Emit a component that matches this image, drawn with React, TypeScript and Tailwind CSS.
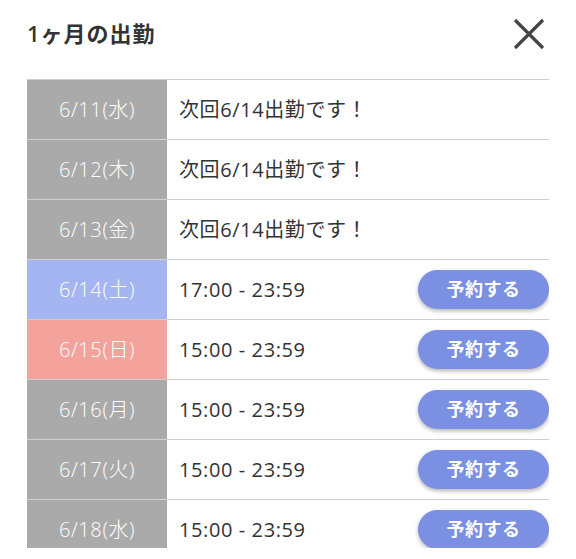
const rows: { date: string; kind: "gray" | "sat" | "sun"; text: string; reserve: boolean }[] = [
  { date: "6/11(水)", kind: "gray", text: "次回6/14出勤です！", reserve: false },
  { date: "6/12(木)", kind: "gray", text: "次回6/14出勤です！", reserve: false },
  { date: "6/13(金)", kind: "gray", text: "次回6/14出勤です！", reserve: false },
  { date: "6/14(土)", kind: "sat", text: "17:00 - 23:59", reserve: true },
  { date: "6/15(日)", kind: "sun", text: "15:00 - 23:59", reserve: true },
  { date: "6/16(月)", kind: "gray", text: "15:00 - 23:59", reserve: true },
  { date: "6/17(火)", kind: "gray", text: "15:00 - 23:59", reserve: true },
  { date: "6/18(水)", kind: "gray", text: "15:00 - 23:59", reserve: true },
];

const dateBg = {
  gray: "bg-[#aaaaaa]",
  sat: "bg-[#a5b5f1]",
  sun: "bg-[#f4a29c]",
};

export default function App() {
  return (
    <div
      className="h-[559px] w-[576px] bg-white"
      style={{ fontFamily: '"Open Sans", "Noto Sans CJK JP", sans-serif' }}
    >
      {/* Header */}
      <div className="flex h-[79px] items-start justify-between pl-[27px] pr-[31px] pt-[18px]">
        <h2 className="text-[22px] font-semibold leading-[30px] tracking-[1px] text-[#333333]">1ヶ月の出勤</h2>
        <button aria-label="閉じる" className="h-[32px] w-[32px]">
          <svg viewBox="0 0 32 32" width="32" height="32" fill="none" stroke="#444444" strokeWidth="3.2">
            <path d="M2 2 L30 30 M30 2 L2 30" />
          </svg>
        </button>
      </div>

      {/* Schedule list */}
      <div className="mx-[27px] h-[469px] overflow-hidden border-t border-[#d0d0d0]">
        {rows.map((r) => (
          <div key={r.date} className="flex h-[60px] border-b border-[#d0d0d0]">
            <div
              className={`flex w-[140px] shrink-0 items-center justify-center text-[20px] font-light tracking-[0.6px] text-white ${dateBg[r.kind]}`}
            >
              {r.date}
            </div>
            <div className="flex flex-1 items-center justify-between pl-[12px] text-[20px] tracking-[0.6px] text-[#333333]">
              <span>{r.text}</span>
              {r.reserve && (
                <button className="h-[39px] w-[131px] rounded-full bg-[#7b8fe3] text-[18px] font-bold tracking-[0.5px] text-white shadow-[0_2px_4px_rgba(0,0,0,0.3)]">
                  予約する
                </button>
              )}
            </div>
          </div>
        ))}
      </div>
    </div>
  );
}
